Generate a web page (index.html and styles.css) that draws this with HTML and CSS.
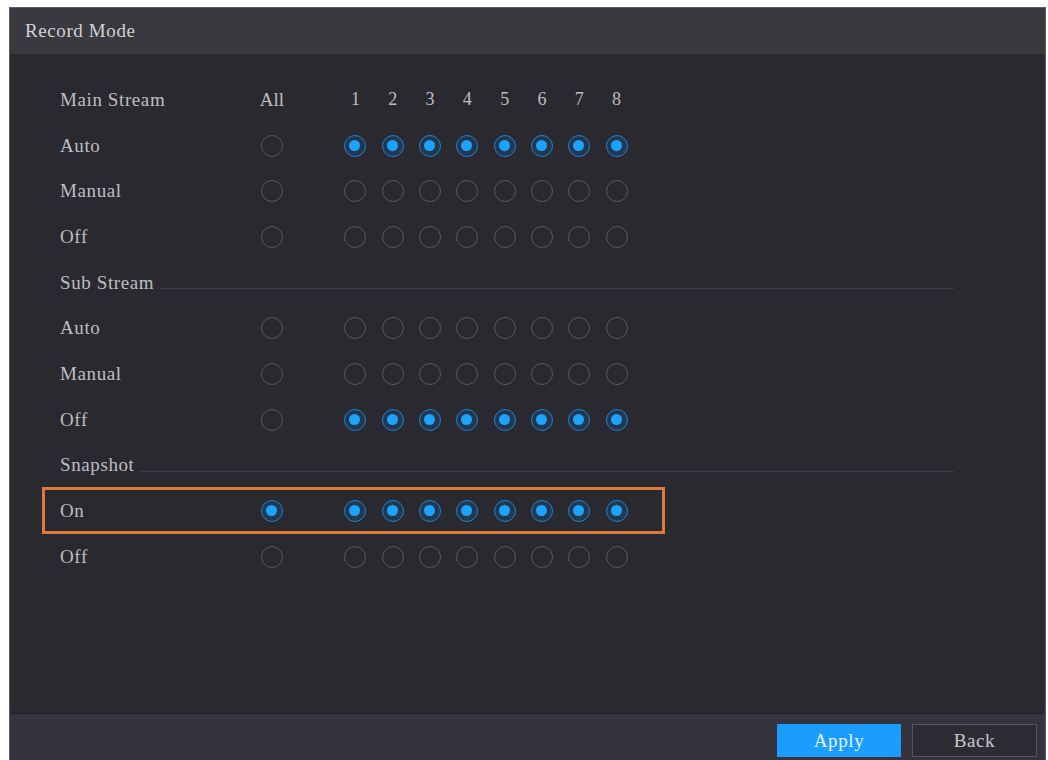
FILE: index.html
```html
<!DOCTYPE html>
<html lang="en">
<head>
    <meta charset="UTF-8">
    <title>Record Mode</title>
    <link rel="stylesheet" href="styles.css">
</head>
<body>
    <div class="panel">
        <div class="title">Record Mode</div>

        <div class="content">
            <div class="row">
                <span class="label">Main Stream</span>
                <span class="all">All</span>
                <span class="cols">
                    <span>1</span><span>2</span><span>3</span><span>4</span><span>5</span><span>6</span><span>7</span><span>8</span>
                </span>
            </div>
            <div class="row">
                <span class="label">Auto</span>
                <span class="all"><i class="radio"></i></span>
                <span class="cols">
                    <span><i class="radio on"></i></span><span><i class="radio on"></i></span><span><i class="radio on"></i></span><span><i class="radio on"></i></span><span><i class="radio on"></i></span><span><i class="radio on"></i></span><span><i class="radio on"></i></span><span><i class="radio on"></i></span>
                </span>
            </div>
            <div class="row">
                <span class="label">Manual</span>
                <span class="all"><i class="radio"></i></span>
                <span class="cols">
                    <span><i class="radio"></i></span><span><i class="radio"></i></span><span><i class="radio"></i></span><span><i class="radio"></i></span><span><i class="radio"></i></span><span><i class="radio"></i></span><span><i class="radio"></i></span><span><i class="radio"></i></span>
                </span>
            </div>
            <div class="row">
                <span class="label">Off</span>
                <span class="all"><i class="radio"></i></span>
                <span class="cols">
                    <span><i class="radio"></i></span><span><i class="radio"></i></span><span><i class="radio"></i></span><span><i class="radio"></i></span><span><i class="radio"></i></span><span><i class="radio"></i></span><span><i class="radio"></i></span><span><i class="radio"></i></span>
                </span>
            </div>

            <div class="row section">
                <span class="section-name">Sub Stream</span>
                <span class="rule"></span>
            </div>
            <div class="row">
                <span class="label">Auto</span>
                <span class="all"><i class="radio"></i></span>
                <span class="cols">
                    <span><i class="radio"></i></span><span><i class="radio"></i></span><span><i class="radio"></i></span><span><i class="radio"></i></span><span><i class="radio"></i></span><span><i class="radio"></i></span><span><i class="radio"></i></span><span><i class="radio"></i></span>
                </span>
            </div>
            <div class="row">
                <span class="label">Manual</span>
                <span class="all"><i class="radio"></i></span>
                <span class="cols">
                    <span><i class="radio"></i></span><span><i class="radio"></i></span><span><i class="radio"></i></span><span><i class="radio"></i></span><span><i class="radio"></i></span><span><i class="radio"></i></span><span><i class="radio"></i></span><span><i class="radio"></i></span>
                </span>
            </div>
            <div class="row">
                <span class="label">Off</span>
                <span class="all"><i class="radio"></i></span>
                <span class="cols">
                    <span><i class="radio on"></i></span><span><i class="radio on"></i></span><span><i class="radio on"></i></span><span><i class="radio on"></i></span><span><i class="radio on"></i></span><span><i class="radio on"></i></span><span><i class="radio on"></i></span><span><i class="radio on"></i></span>
                </span>
            </div>

            <div class="row section">
                <span class="section-name">Snapshot</span>
                <span class="rule"></span>
            </div>
            <div class="row highlight">
                <span class="label">On</span>
                <span class="all"><i class="radio on"></i></span>
                <span class="cols">
                    <span><i class="radio on"></i></span><span><i class="radio on"></i></span><span><i class="radio on"></i></span><span><i class="radio on"></i></span><span><i class="radio on"></i></span><span><i class="radio on"></i></span><span><i class="radio on"></i></span><span><i class="radio on"></i></span>
                </span>
            </div>
            <div class="row">
                <span class="label">Off</span>
                <span class="all"><i class="radio"></i></span>
                <span class="cols">
                    <span><i class="radio"></i></span><span><i class="radio"></i></span><span><i class="radio"></i></span><span><i class="radio"></i></span><span><i class="radio"></i></span><span><i class="radio"></i></span><span><i class="radio"></i></span><span><i class="radio"></i></span>
                </span>
            </div>
        </div>

        <div class="footer">
            <button class="btn apply">Apply</button>
            <button class="btn back">Back</button>
        </div>
    </div>
</body>
</html>
```

FILE: styles.css
```css
*, *::before, *::after {
    margin: 0;
    padding: 0;
    box-sizing: border-box;
}

body {
    background-color: #fff;
    font-family: "Liberation Serif", "Times New Roman", serif;
    font-size: 19px;
    letter-spacing: 0.6px;
    color: #bebec1;
}

.panel {
    margin: 7px 0 0 9px;
    width: 1037px;
    height: 753px;
    display: flex;
    flex-direction: column;
    background-color: #2a2930;
    border: 1px solid #5e5d63;
    border-bottom: none;
}

.title {
    height: 46px;
    flex-shrink: 0;
    display: flex;
    align-items: center;
    padding-left: 15px;
    background-color: #3a3940;
    color: #d2d2d4;
}

.content {
    flex: 1;
    padding: 23px 91px 0 50px;
}

.row {
    height: 45.7px;
    display: flex;
    align-items: center;
    position: relative;
}

.label {
    width: 200px;
    flex-shrink: 0;
}

.all {
    width: 24px;
    display: flex;
    justify-content: center;
    flex-shrink: 0;
    letter-spacing: 0;
}

.cols {
    display: flex;
    margin-left: 52.8px;
}

.cols span {
    width: 37.3px;
    display: flex;
    justify-content: center;
    letter-spacing: 0;
    font-size: 18px;
}

.radio {
    display: block;
    width: 22px;
    height: 22px;
    border-radius: 50%;
    border: 1.5px solid #5a5960;
    position: relative;
}

.radio.on {
    border-color: #1f82cf;
    background-color: #22384f;
}

.radio.on::after {
    content: '';
    position: absolute;
    left: 4px;
    top: 4px;
    width: 11px;
    height: 11px;
    border-radius: 50%;
    background-color: #1ca3ff;
}

.section-name {
    flex-shrink: 0;
}

.rule {
    flex: 1;
    height: 1px;
    margin: 12px 0 0 6px;
    background-color: #3d3c45;
}

/* annotation box around the snapshot row */
.highlight::after {
    content: '';
    position: absolute;
    left: -18px;
    top: -1px;
    width: 623px;
    height: 47px;
    border: 3px solid #e2793c;
}

.footer {
    height: 47px;
    flex-shrink: 0;
    display: flex;
    justify-content: flex-end;
    align-items: flex-start;
    gap: 11px;
    padding: 10px 8px 0 0;
    background-color: #34333e;
    border-top: 1px solid #202026;
}

.btn {
    width: 124px;
    height: 33px;
    font-family: inherit;
    font-size: 19px;
    letter-spacing: 0.6px;
    border: none;
}

.apply {
    background-color: #1b9cff;
    color: #e8f4ff;
}

.back {
    background-color: #2d2c34;
    color: #c8c8ca;
    border: 1px solid #56555d;
    width: 125px;
}
```
